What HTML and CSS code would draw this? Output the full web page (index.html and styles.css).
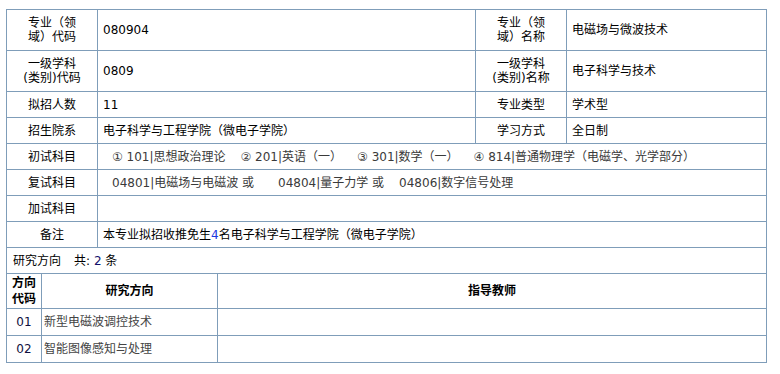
FILE: index.html
```html
<!DOCTYPE html>
<html lang="zh-CN">
<head>
<meta charset="utf-8">
<title>专业信息</title>
<link rel="stylesheet" href="styles.css">
</head>
<body>
<div class="page">
<table class="info">
  <colgroup><col class="c1"><col class="c2"><col class="c3"><col class="c4"></colgroup>
  <tr class="tall">
    <td class="label">专业（领<br>域）代码</td>
    <td class="val">080904</td>
    <td class="label">专业（领<br>域）名称</td>
    <td class="val">电磁场与微波技术</td>
  </tr>
  <tr class="tall">
    <td class="label">一级学科<br>(类别)代码</td>
    <td class="val">0809</td>
    <td class="label">一级学科<br>(类别)名称</td>
    <td class="val">电子科学与技术</td>
  </tr>
  <tr>
    <td class="label">拟招人数</td>
    <td class="val">11</td>
    <td class="label">专业类型</td>
    <td class="val">学术型</td>
  </tr>
  <tr>
    <td class="label">招生院系</td>
    <td class="val">电子科学与工程学院（微电子学院）</td>
    <td class="label">学习方式</td>
    <td class="val">全日制</td>
  </tr>
  <tr>
    <td class="label">初试科目</td>
    <td class="val subj" colspan="3"><span class="item">① 101|思想政治理论</span><span class="item">② 201|英语（一）</span><span class="item">③ 301|数学（一）</span><span class="item">④ 814|普通物理学（电磁学、光学部分）</span></td>
  </tr>
  <tr>
    <td class="label">复试科目</td>
    <td class="val subj" colspan="3"><span class="item wide">04801|电磁场与电磁波 或</span><span class="item">04804|量子力学 或</span><span class="item">04806|数字信号处理</span></td>
  </tr>
  <tr>
    <td class="label">加试科目</td>
    <td class="val" colspan="3"></td>
  </tr>
  <tr>
    <td class="label">备注</td>
    <td class="val" colspan="3">本专业拟招收推免生<span class="num">4</span>名电子科学与工程学院（微电子学院）</td>
  </tr>
</table>
<table class="dirs">
  <colgroup><col class="d1"><col class="d2"><col class="d3"></colgroup>
  <tr>
    <td class="count" colspan="3">研究方向<span class="gap"></span>共: <span class="cnt">2</span> 条</td>
  </tr>
  <tr class="head">
    <th>方向<br>代码</th>
    <th>研究方向</th>
    <th>指导教师</th>
  </tr>
  <tr>
    <td class="code">01</td>
    <td class="name">新型电磁波调控技术</td>
    <td></td>
  </tr>
  <tr>
    <td class="code">02</td>
    <td class="name">智能图像感知与处理</td>
    <td></td>
  </tr>
</table>
</div>
</body>
</html>
```

FILE: styles.css
```css
html, body {
  margin: 0;
  padding: 0;
  background: #fff;
}
body {
  font-family: "DejaVu Sans", "Noto Sans CJK SC", sans-serif;
  font-size: 12px;
  color: #000;
}
.page {
  padding: 9px 0 0 6px;
}
table {
  border-collapse: collapse;
  table-layout: fixed;
  width: 760px;
}
td, th {
  border: 1px solid #7f9db9;
  padding: 0;
  height: 25px;
  line-height: 14px;
  vertical-align: middle;
}
.c1 { width: 91px; }
.c2 { width: 378px; }
.c3 { width: 91px; }
.c4 { width: 200px; }
.tall td { height: 40px; }
.label {
  text-align: center;
}
.val {
  padding-left: 5px;
  text-align: left;
}
.subj {
  color: #3a3a3a;
  padding-left: 14px;
}
.subj .item { margin-right: 15px; }
.subj .item.wide { margin-right: 24px; }
.num { color: #1a3adf; }
.dirs tr:first-child td { border-top: none; }
.d1 { width: 35px; }
.d2 { width: 176px; }
.d3 { width: 549px; }
.count {
  padding-left: 6px;
}
.gap { display: inline-block; width: 13px; }
.cnt { color: #10106a; }
.head th {
  height: 34px;
  font-weight: bold;
  font-size: 12px;
  line-height: 16px;
  text-align: center;
}
.code {
  text-align: center;
  height: 26px;
  color: #101040;
}
.name {
  padding-left: 2px;
  color: #444;
  height: 26px;
}
```
